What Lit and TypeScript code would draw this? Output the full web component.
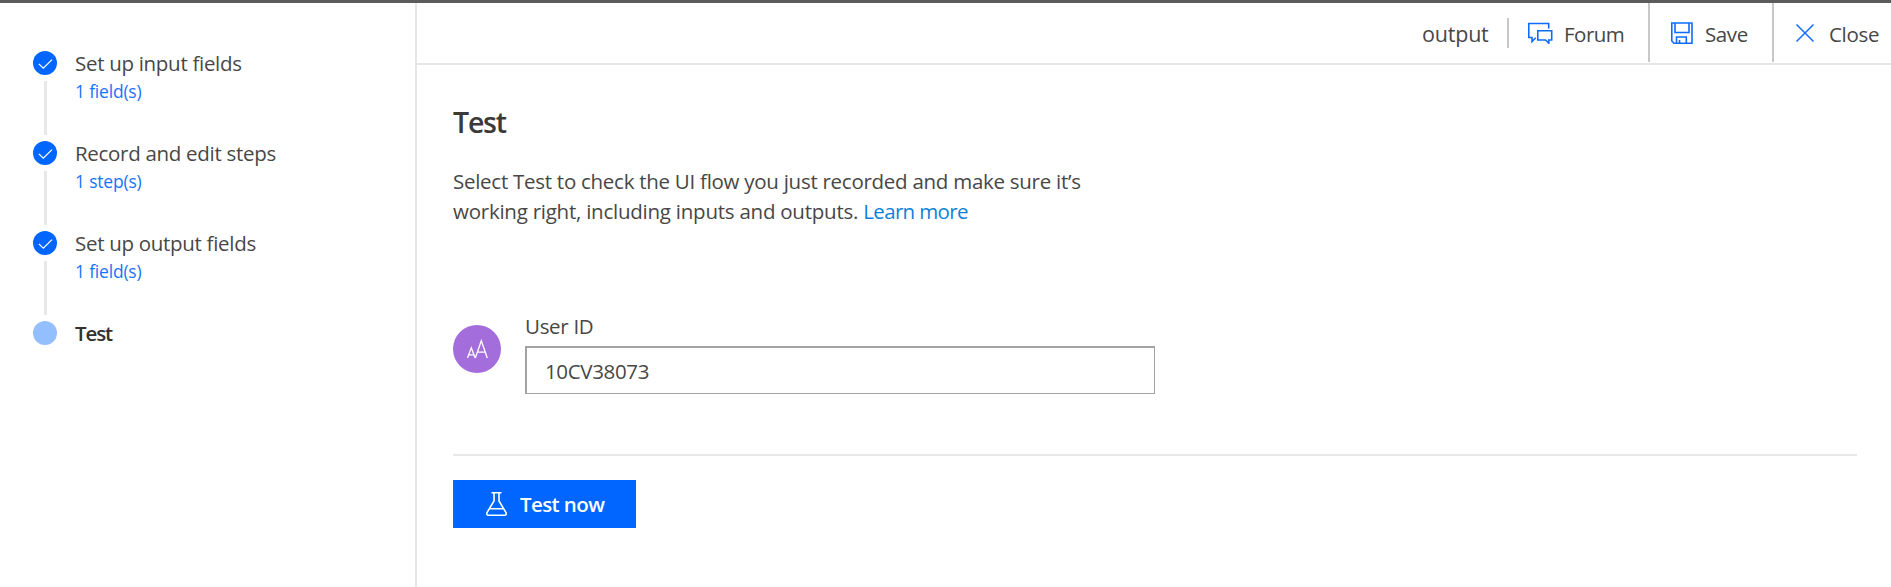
import { LitElement, html, css, svg } from "lit";
import { customElement, property } from "lit/decorators.js";

const check = svg`<path d="M5.8 12.9 L10.3 17.2 L19 8.6" fill="none" stroke="#fff" stroke-width="1.3"/>`;

@customElement("flow-step")
class FlowStep extends LitElement {
  @property() label = "";
  @property() detail = "";
  @property({ type: Boolean }) current = false;

  static styles = css`
    :host { display: grid; grid-template-columns: 24px 1fr; column-gap: 18px; height: 90px; }
    .rail { display: flex; flex-direction: column; align-items: center; gap: 6px; }
    .dot { display: block; width: 24px; height: 24px; }
    .line { width: 3px; height: 54px; margin-left: 1px; background: #e8e8e8; }
    .text { white-space: nowrap; }
    .label { font-size: 20.5px; line-height: 24px; letter-spacing: -0.3px; color: #484746; }
    .now { font-weight: 600; letter-spacing: -1.1px; color: #323130; }
    .detail { font-size: 17.5px; line-height: 24px; margin-top: 4px; letter-spacing: -0.2px; color: #1a73ff; }
  `;

  render() {
    return html`
      <div class="rail">
        <svg class="dot" viewBox="0 0 24 24">
          <circle cx="12" cy="12" r="12" fill=${this.current ? "#94bfff" : "#0066ff"} />
          ${this.current ? null : check}
        </svg>
        ${this.current ? null : html`<div class="line"></div>`}
      </div>
      <div class="text">
        <div class="label ${this.current ? "now" : ""}">${this.label}</div>
        ${this.detail ? html`<div class="detail">${this.detail}</div>` : null}
      </div>
    `;
  }
}

@customElement("app-root")
class AppRoot extends LitElement {
  static styles = css`
    * { box-sizing: border-box; }
    :host {
      display: grid; grid-template-columns: 417px 1fr; box-sizing: border-box;
      height: 587px; border-top: 3px solid #5d5c5c; background: #fff; overflow: hidden;
      font-family: "Open Sans", "Noto Sans", sans-serif; font-size: 20.5px; color: #484746;
    }
    nav { border-right: 2px solid #e6e6e6; padding: 48px 0 0 33px; }
    header { display: flex; height: 62px; border-bottom: 2px solid #e6e6e6; padding-left: 1005px; line-height: 28px; white-space: nowrap; }
    .name { width: 85px; padding-top: 17px; font-size: 21.5px; letter-spacing: -0.2px; }
    .bar { width: 2px; height: 30px; margin-top: 15px; background: #c8c8c8; }
    .cmd { display: flex; height: 59px; padding-top: 17px; }
    .cmd svg { display: block; height: 24px; }
    .forum { width: 141px; padding-left: 18px; border-right: 2px solid #c8c8c8; }
    .save { width: 124px; padding-left: 20px; border-right: 2px solid #c8c8c8; }
    .close { padding-left: 21px; }
    .forum svg { width: 27px; margin-right: 10px; }
    .save svg { width: 24px; margin-right: 11px; }
    .close svg { width: 20px; margin-right: 14px; }
    .forum span { letter-spacing: -0.5px; }
    .save span { letter-spacing: -0.4px; }
    .close span { letter-spacing: -0.3px; }
    .body { padding: 37px 34px 0 36px; }
    h1 { margin: 0; font-size: 28.5px; line-height: 40px; font-weight: 600; letter-spacing: -1.2px; color: #3b3a39; }
    p { margin: 24px 0 0; line-height: 30px; white-space: nowrap; }
    .l1 { display: block; letter-spacing: -0.27px; }
    .l2 { display: block; letter-spacing: -0.24px; }
    a { color: #0f7fdb; letter-spacing: -0.65px; }
    .field { display: grid; grid-template-columns: 48px 630px; column-gap: 24px; margin-top: 87px; }
    .avatar { display: block; width: 48px; height: 48px; margin-top: 12px; }
    label { display: block; line-height: 26px; height: 33px; letter-spacing: -0.3px; }
    .input { height: 48px; border: 2px solid #a3a3a3; border-right-width: 1px; border-bottom-width: 1px; padding-left: 18px; line-height: 47px; }
    .input span { letter-spacing: -0.35px; }
    .rule { height: 2px; margin-top: 60px; background: #e8e8e8; }
    .btn { display: flex; width: 183px; height: 48px; margin-top: 24px; background: #0066ff; color: #fff; padding-left: 32px; font-weight: 600; line-height: 48px; white-space: nowrap; }
    .btn svg { display: block; width: 24px; height: 28px; margin: 10px 11px 0 0; }
    .btn span { letter-spacing: -0.6px; }
  `;

  render() {
    return html`
      <nav>
        <flow-step label="Set up input fields" detail="1 field(s)"></flow-step>
        <flow-step label="Record and edit steps" detail="1 step(s)"></flow-step>
        <flow-step label="Set up output fields" detail="1 field(s)"></flow-step>
        <flow-step label="Test" current></flow-step>
      </nav>
      <main>
        <header>
          <div class="name"><span>output</span></div>
          <div class="bar"></div>
          <div class="cmd forum">
            <svg viewBox="0 0 27 24" fill="none" stroke="#0f6cff" stroke-width="1.6">
              <path d="M21.7 8.5V3.5H1.8V17.5H5V21.5L8.8 17.8M10.8 10.8H24.7V20H21.8V23.2L18.6 20H10.8Z" />
            </svg><span>Forum</span>
          </div>
          <div class="cmd save">
            <svg viewBox="0 0 24 24" fill="none" stroke="#0f6cff" stroke-width="1.6">
              <path d="M1.8 3H22V23.2H4L1.8 21V3ZM5 3V12.5H19V3M6.5 23.2V17H16.3V23.2M9.5 23V20" />
            </svg><span>Save</span>
          </div>
          <div class="cmd close">
            <svg viewBox="0 0 20 24" fill="none" stroke="#0f6cff" stroke-width="1.5">
              <path d="M1.5 4.5L18.5 21.5M18.5 4.5L1.5 21.5" />
            </svg><span>Close</span>
          </div>
        </header>
        <div class="body">
          <h1><span>Test</span></h1>
          <p>
            <span class="l1">Select Test to check the UI flow you just recorded and make sure it’s</span>
            <span class="l2">working right, including inputs and outputs. <a>Learn more</a></span>
          </p>
          <div class="field">
            <svg class="avatar" viewBox="0 0 48 48">
              <circle cx="24" cy="24" r="24" fill="#a36edb" />
              <path d="M14.5 33L18.3 22.8L22.2 33M15.8 29.8H20.9M22.3 33L28.3 15.8L34.3 33M24.4 27.2H32.3" fill="none" stroke="#fff" stroke-width="1.3" />
            </svg>
            <div>
              <label><span>User ID</span></label>
              <div class="input"><span>10CV38073</span></div>
            </div>
          </div>
          <div class="rule"></div>
          <div class="btn">
            <svg viewBox="0 0 24 28" fill="none" stroke="#fff" stroke-width="1.6">
              <path d="M6.5 2.8H16.5M9 3V11L2 22.6Q1.2 25.2 3.4 25.2H19.6Q21.8 25.2 21 22.6L14 11V3M4.8 18.8H18.2" />
            </svg><span>Test now</span>
          </div>
        </div>
      </main>
    `;
  }
}
